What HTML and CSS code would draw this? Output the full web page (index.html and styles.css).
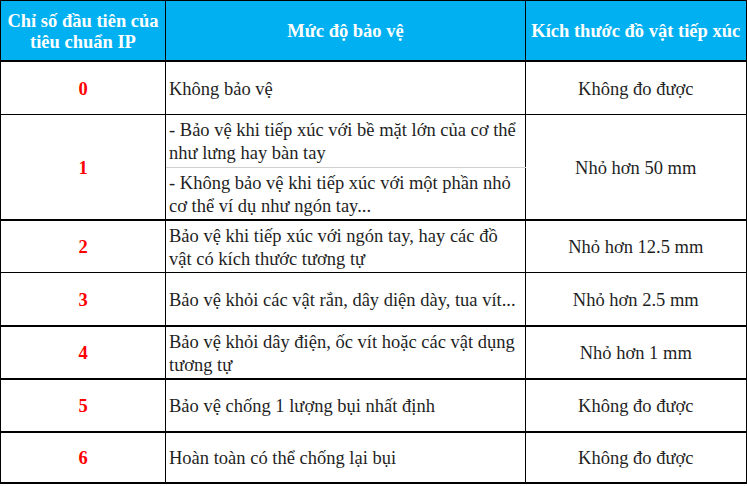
FILE: index.html
```html
<!DOCTYPE html>
<html lang="vi">
<head>
<meta charset="utf-8">
<link rel="stylesheet" href="styles.css">
</head>
<body>
<table class="ip">
  <colgroup>
    <col class="c1"><col class="c2"><col class="c3">
  </colgroup>
  <thead>
    <tr class="hd">
      <th>Chỉ số đầu tiên của<br>tiêu chuẩn IP</th>
      <th>Mức độ bảo vệ</th>
      <th>Kích thước đồ vật tiếp xúc</th>
    </tr>
  </thead>
  <tbody>
    <tr class="r tall">
      <td class="num">0</td>
      <td class="desc">Không bảo vệ</td>
      <td class="size">Không đo được</td>
    </tr>
    <tr class="r half thick tall">
      <td class="num" rowspan="2">1</td>
      <td class="desc sub-top">- Bảo vệ khi tiếp xúc với bề mặt lớn của cơ thể<br>như lưng hay bàn tay</td>
      <td class="size" rowspan="2">Nhỏ hơn 50 mm</td>
    </tr>
    <tr class="r half">
      <td class="desc sub-bot">- Không bảo vệ khi tiếp xúc với một phần nhỏ<br>cơ thể ví dụ như ngón tay...</td>
    </tr>
    <tr class="r">
      <td class="num">2</td>
      <td class="desc">Bảo vệ khi tiếp xúc với ngón tay, hay các đồ<br>vật có kích thước tương tự</td>
      <td class="size">Nhỏ hơn 12.5 mm</td>
    </tr>
    <tr class="r thick tall">
      <td class="num">3</td>
      <td class="desc">Bảo vệ khỏi các vật rắn, dây diện dày, tua vít...</td>
      <td class="size">Nhỏ hơn 2.5 mm</td>
    </tr>
    <tr class="r thick">
      <td class="num">4</td>
      <td class="desc">Bảo vệ khỏi dây điện, ốc vít hoặc các vật dụng<br>tương tự</td>
      <td class="size">Nhỏ hơn 1 mm</td>
    </tr>
    <tr class="r thick">
      <td class="num">5</td>
      <td class="desc">Bảo vệ chống 1 lượng bụi nhất định</td>
      <td class="size">Không đo được</td>
    </tr>
    <tr class="r last">
      <td class="num">6</td>
      <td class="desc">Hoàn toàn có thể chống lại bụi</td>
      <td class="size">Không đo được</td>
    </tr>
  </tbody>
</table>
</body>
</html>
```

FILE: styles.css
```css
html, body {
  margin: 0;
  padding: 0;
  background: #ffffff;
}

.ip {
  border-collapse: collapse;
  table-layout: fixed;
  width: 746px;
  font-family: "Liberation Serif", "Times New Roman", serif;
  font-size: 18.5px;
  color: #1f1f1f;
}

.c1 { width: 165px; }
.c2 { width: 360px; }
.c3 { width: 221px; }

.ip th, .ip td {
  border: 1px solid #000;
  padding: 2px 3px 0;
  vertical-align: middle;
  line-height: 23px;
}

.hd th {
  height: 57px;
  background: #00b0f0;
  color: #ffffff;
  font-weight: bold;
  text-align: center;
  border-bottom: 2px solid #000;
  padding: 2px 0 0;
  line-height: 21px;
}

.r td { height: 49px; }
.r.tall td { height: 50px; }
.r.last td { height: 47px; }

.num {
  text-align: center;
  color: #ff0000;
  font-weight: bold;
}

.desc {
  text-align: left;
  white-space: nowrap;
}

.size {
  text-align: center;
}

.sub-top { border-bottom-color: #d0d0d0 !important; }
.sub-bot { border-top-color: #d0d0d0 !important; }

.thick td { border-bottom-width: 2px; }
.half.thick td.sub-top { border-bottom-width: 1px; }
.ip td.sub-bot { border-bottom-width: 2px; }

.ip th:last-child, .ip td.size { border-right-width: 2px; }
.last td { border-bottom-width: 2px; }
```
